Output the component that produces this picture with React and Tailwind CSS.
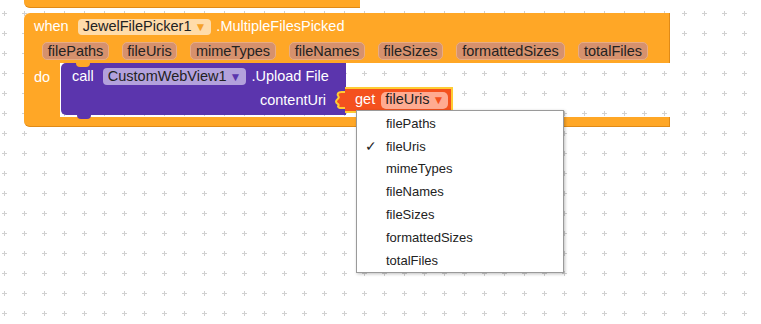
import React from 'react';

const font = "font-['Liberation_Sans',Arial,sans-serif]";

const args = [
  ['filePaths', 'w-[67px]'],
  ['fileUris', 'w-[55px]'],
  ['mimeTypes', 'w-[86px]'],
  ['fileNames', 'w-[76px]'],
  ['fileSizes', 'w-[65px]'],
  ['formattedSizes', 'w-[109px]'],
  ['totalFiles', 'w-[70px]'],
];

const menu = ['filePaths', 'fileUris', 'mimeTypes', 'fileNames', 'fileSizes', 'formattedSizes', 'totalFiles'];

const Grid = () => (
  <svg className="absolute inset-0" width="761" height="324">
    <defs>
      <pattern id="plus" width="20" height="20" patternUnits="userSpaceOnUse" patternTransform="translate(-6 3)">
        <path d="M8 10.5h5M10.5 8v5" stroke="#d0d0d0" strokeWidth="1" />
      </pattern>
    </defs>
    <rect width="761" height="324" fill="url(#plus)" />
  </svg>
);

const App = () => {
  return (
    <div className={`relative w-[761px] h-[324px] overflow-hidden bg-white ${font} text-[14.5px]`}>
      <Grid />

      {/* block above, cut off */}
      <div className="absolute left-[24px] top-0 w-[336px] h-[8px] bg-[#ffa726] rounded-bl-[6px] border-b border-[#e08a16]" />

      {/* event block */}
      <div className="absolute left-[24px] top-[13px] w-[646px] flex flex-col">
        <div className="h-[50px] bg-[#ffa726] rounded-tl-[6px] border-r border-[#e08a16] flex flex-col">
          <div className="flex items-center h-[26px] pt-[2px] pl-[10px] text-white">
            <span>when</span>
            <span className="ml-[9px] h-[16px] px-[5px] rounded-[4px] bg-[#ffdcaa] text-[#222] flex items-center gap-[3px]">
              JewelFilePicker1
              <span className="text-[#f5a12a] text-[12px]">▼</span>
            </span>
            <span className="ml-[5px]">.MultipleFilesPicked</span>
          </div>
          <div className="flex items-center gap-[13px] pl-[18px] h-[22px] pt-[2px]">
            {args.map(([a, w]) => (
              <span
                key={a}
                className={`${w} h-[18px] rounded-[5px] bg-[#d6916d] border border-[#e8ac84] text-[#222] flex items-center justify-center leading-none`}
              >
                {a}
              </span>
            ))}
          </div>
        </div>

        <div className="flex h-[54px]">
          <div className="w-[36px] bg-[#ffa726] text-white pl-[10px] pt-[4px]">do</div>
          <div className="flex-1 pl-[1px]">
            <div className="relative w-[285px] h-[52px] bg-[#5b35ad] rounded-tl-[5px] rounded-bl-[5px] flex flex-col text-white">
              <div className="absolute left-[15px] top-0 w-[14px] h-[4px] bg-[#ffa726] rounded-b-[5px]" />
              <div className="absolute left-[16px] -bottom-[4px] w-[14px] h-[4px] bg-[#5b35ad] rounded-b-[5px]" />
              <div className="flex items-center h-[26px] pt-[1px] pl-[11px]">
                <span>call</span>
                <span className="ml-[9px] h-[17px] px-[5px] rounded-[4px] bg-[#b3a1dc] text-[#222] flex items-center gap-[3px]">
                  CustomWebView1
                  <span className="text-[#5b35ad] text-[12px]">▼</span>
                </span>
                <span className="ml-[5px]">.Upload File</span>
              </div>
              <div className="flex items-center justify-end h-[24px] pr-[20px]">contentUri</div>
            </div>
          </div>
        </div>

        <div className="h-[10px] bg-[#ffa726] rounded-bl-[6px] border-b border-r border-[#e08a16]" />
      </div>

      {/* get block */}
      <svg className="absolute left-[335px] top-[91px]" width="12" height="18" viewBox="0 0 12 18">
        <path d="M11 1H6.5C3 1 1.5 3 3.5 5.5C5 7.5 1 8 1 10.5C1 13 4.5 13 3.5 14.5C2 16 4 17 7 17H11Z" fill="#f4511e" stroke="#ffcc33" strokeWidth="2" />
      </svg>
      <div className="absolute left-[345px] top-[87px] w-[108px] h-[26px] bg-[#f4511e] border-2 border-l-0 border-[#ffcc33] flex items-center text-white pl-[10px]">
        <span>get</span>
        <span className="ml-[6px] h-[17px] px-[4px] rounded-[5px] bg-[#ffab91] text-[#222] flex items-center gap-[3px]">
          fileUris
          <span className="text-[#f4511e] text-[12px]">▼</span>
        </span>
      </div>

      {/* dropdown menu */}
      <div className="absolute left-[356px] top-[110px] w-[208px] h-[163px] bg-white border border-[#9a9a9a] shadow-[1px_1px_3px_rgba(0,0,0,0.25)] flex flex-col pt-[1px] text-[13px] text-[#222]">
        {menu.map((m) => (
          <div key={m} className="h-[23px] flex items-center">
            <span className="w-[29px] pl-[8px] text-[14px]">{m === 'fileUris' ? '✓' : ''}</span>
            <span>{m}</span>
          </div>
        ))}
      </div>
    </div>
  );
};

export default App;
